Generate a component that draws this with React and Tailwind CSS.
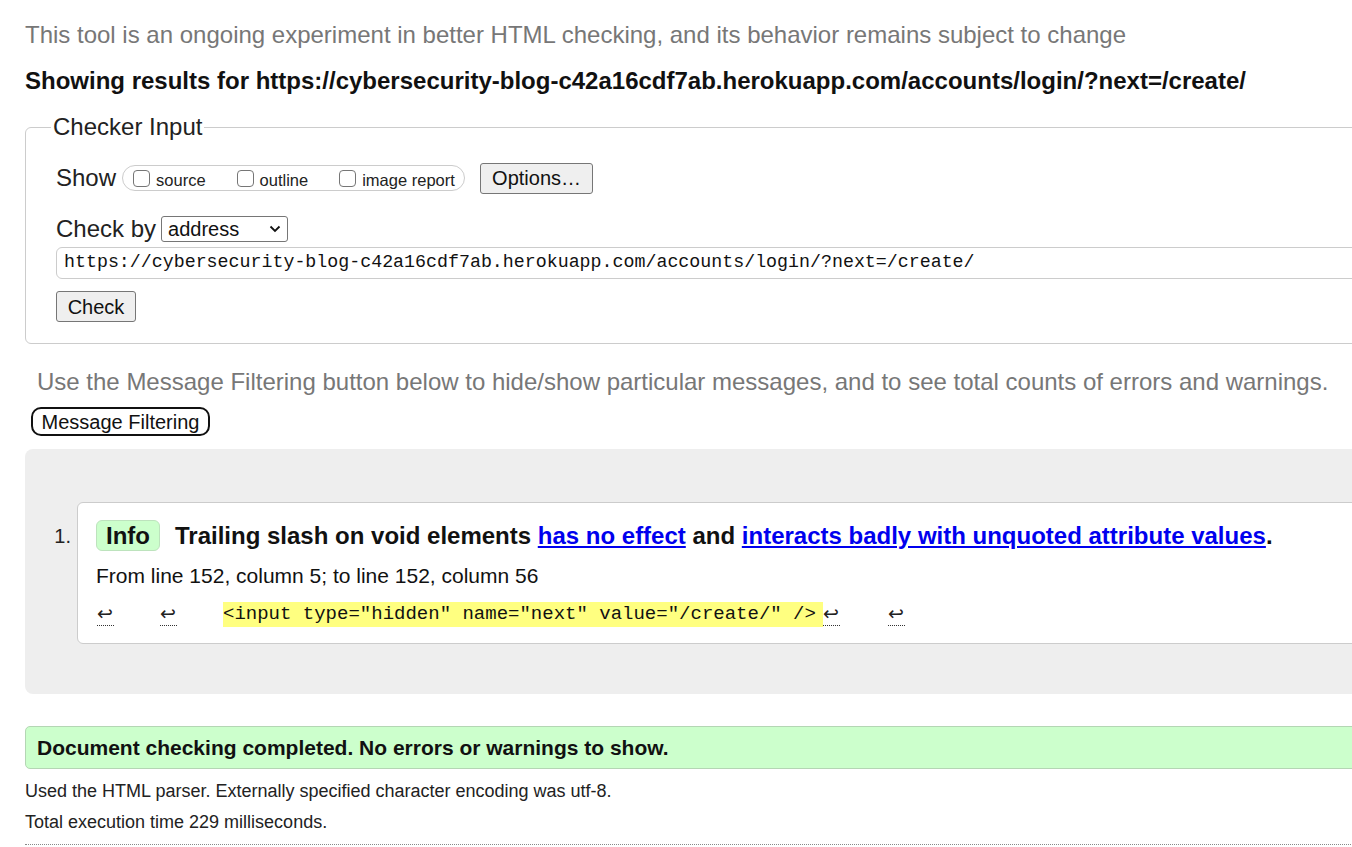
export default function App() {
  const ret = (
    <span className="inline-block w-[17px] h-[24px] border-b border-dotted border-[#333] font-['DejaVu_Sans',sans-serif] text-[19px] leading-[22px] text-[#222] overflow-visible">↩</span>
  );
  const Box = () => (
    <span className="inline-block w-[17px] h-[17px] rounded-[4px] border border-[#767676] bg-white align-[-1px] mr-[6px]"></span>
  );
  return (
    <div className="w-[1352px] h-[847px] overflow-hidden bg-white font-['Liberation_Sans',Arial,sans-serif] text-black">
      <div className="pl-[25px]">
        <p className="pt-[22px] text-[24px] leading-[26px] text-[#777] whitespace-nowrap">
          This tool is an ongoing experiment in better HTML checking, and its behavior remains subject to change
        </p>
        <h2 className="mt-[20px] text-[24px] leading-[26px] font-bold text-[#111] whitespace-nowrap">
          Showing results for https://cybersecurity-blog-c42a16cdf7ab.herokuapp.com/accounts/login/?next=/create/
        </h2>

        <fieldset className="mt-[20px] w-[1400px] border border-[#ccc] rounded-[6px] p-0 pb-[21px]">
          <legend className="ml-[25px] px-[2px] text-[24px] leading-[26px] text-[#222]">Checker Input</legend>
          <div className="pl-[30px]">
            <div className="mt-[23px] flex items-center h-[30px]">
              <span className="text-[24px] leading-[26px] text-[#222] mr-[6px]">Show</span>
              <div className="flex items-center h-[26px] w-[343px] border border-[#ccc] rounded-[13px] pl-[10px] text-[16.5px] text-[#222]">
                <label className="flex items-center"><Box /><span className="mt-[5px]">source</span></label>
                <label className="flex items-center ml-[31px]"><Box /><span className="mt-[5px]">outline</span></label>
                <label className="flex items-center ml-[31px]"><Box /><span className="mt-[5px]">image report</span></label>
              </div>
              <button className="ml-[15px] h-[31px] w-[113px] bg-[#efefef] border border-[#767676] rounded-[3px] text-[20px] leading-[24px] text-[#111]">Options…</button>
            </div>
            <div className="mt-[23px] flex items-center h-[26px]">
              <span className="text-[24px] leading-[26px] text-[#222] mr-[5px]">Check by</span>
              <div className="flex items-center justify-between w-[127px] h-[26px] border border-[#767676] rounded-[3px] pl-[6px] pr-[6px] text-[20px] text-[#111]">
                <span>address</span>
                <svg width="12" height="8" viewBox="0 0 12 8"><path d="M1.5 1.5 L6 6 L10.5 1.5" fill="none" stroke="#111" strokeWidth="1.8" /></svg>
              </div>
            </div>
            <div className="mt-[5px] h-[32px] border border-[#ccc] rounded-[6px] flex items-center pl-[7px] font-['Liberation_Mono',monospace] text-[18.3px] text-[#111] whitespace-nowrap">
              https://cybersecurity-blog-c42a16cdf7ab.herokuapp.com/accounts/login/?next=/create/
            </div>
            <button className="mt-[12px] h-[31px] w-[80px] bg-[#efefef] border border-[#767676] rounded-[3px] text-[20px] leading-[24px] text-[#111]">Check</button>
          </div>
        </fieldset>

        <p className="mt-[25px] pl-[12px] text-[24px] leading-[26px] text-[#777] whitespace-nowrap">
          Use the Message Filtering button below to hide/show particular messages, and to see total counts of errors and warnings.
        </p>
        <button className="mt-[12px] ml-[6px] h-[29px] w-[179px] border-2 border-[#111] rounded-[10px] bg-white text-[20px] leading-[22px] text-[#111]">Message Filtering</button>

        <div className="mt-[13px] w-[1400px] h-[245px] bg-[#eeeeee] rounded-tl-[8px] rounded-bl-[8px] pt-[53px] flex">
          <div className="w-[52px] pt-[22px] pr-[6px] text-right text-[20px] leading-[24px] text-[#222]">1.</div>
          <div className="flex-1 h-[142px] bg-white border border-[#ccc] rounded-[6px] pl-[18px] pt-[17px]">
            <div className="flex items-center h-[31px] whitespace-nowrap">
              <span className="h-[31px] px-[9px] flex items-center bg-[#ccffcc] border border-[#bde3bd] rounded-[6px] font-bold text-[24px] text-[#111]">Info</span>
              <span className="ml-[15px] text-[24px] font-bold text-[#111]">
                Trailing slash on void elements{" "}
                <a className="text-[#0000ee] underline" href="#">has no effect</a> and{" "}
                <a className="text-[#0000ee] underline" href="#">interacts badly with unquoted attribute values</a>.
              </span>
            </div>
            <div className="mt-[13px] text-[21px] leading-[24px] text-[#111] whitespace-nowrap">From line 152, column 5; to line 152, column 56</div>
            <div className="mt-[14px] flex items-center h-[25px] whitespace-nowrap">
              <span className="ml-[1px]">{ret}</span>
              <span className="ml-[46px]">{ret}</span>
              <span className="ml-[46px] bg-[#ffff80] h-[25px] flex items-center font-['Liberation_Mono',monospace] text-[19px] text-[#111] w-[600px]">&lt;input type="hidden" name="next" value="/create/" /&gt;</span>
              <span>{ret}</span>
              <span className="ml-[48px]">{ret}</span>
            </div>
          </div>
        </div>

        <div className="mt-[32px] w-[1400px] h-[43px] bg-[#ccffcc] border border-[#b4d6b4] rounded-[5px] flex items-center pl-[11px] text-[21px] font-bold text-[#111] whitespace-nowrap">
          Document checking completed. No errors or warnings to show.
        </div>
        <p className="mt-[12px] text-[18px] leading-[20px] text-[#222]">Used the HTML parser. Externally specified character encoding was utf-8.</p>
        <p className="mt-[11px] text-[18px] leading-[20px] text-[#222]">Total execution time 229 milliseconds.</p>
        <div className="mt-[12px] w-[1400px] border-t border-dotted border-[#888]"></div>
      </div>
    </div>
  );
}
